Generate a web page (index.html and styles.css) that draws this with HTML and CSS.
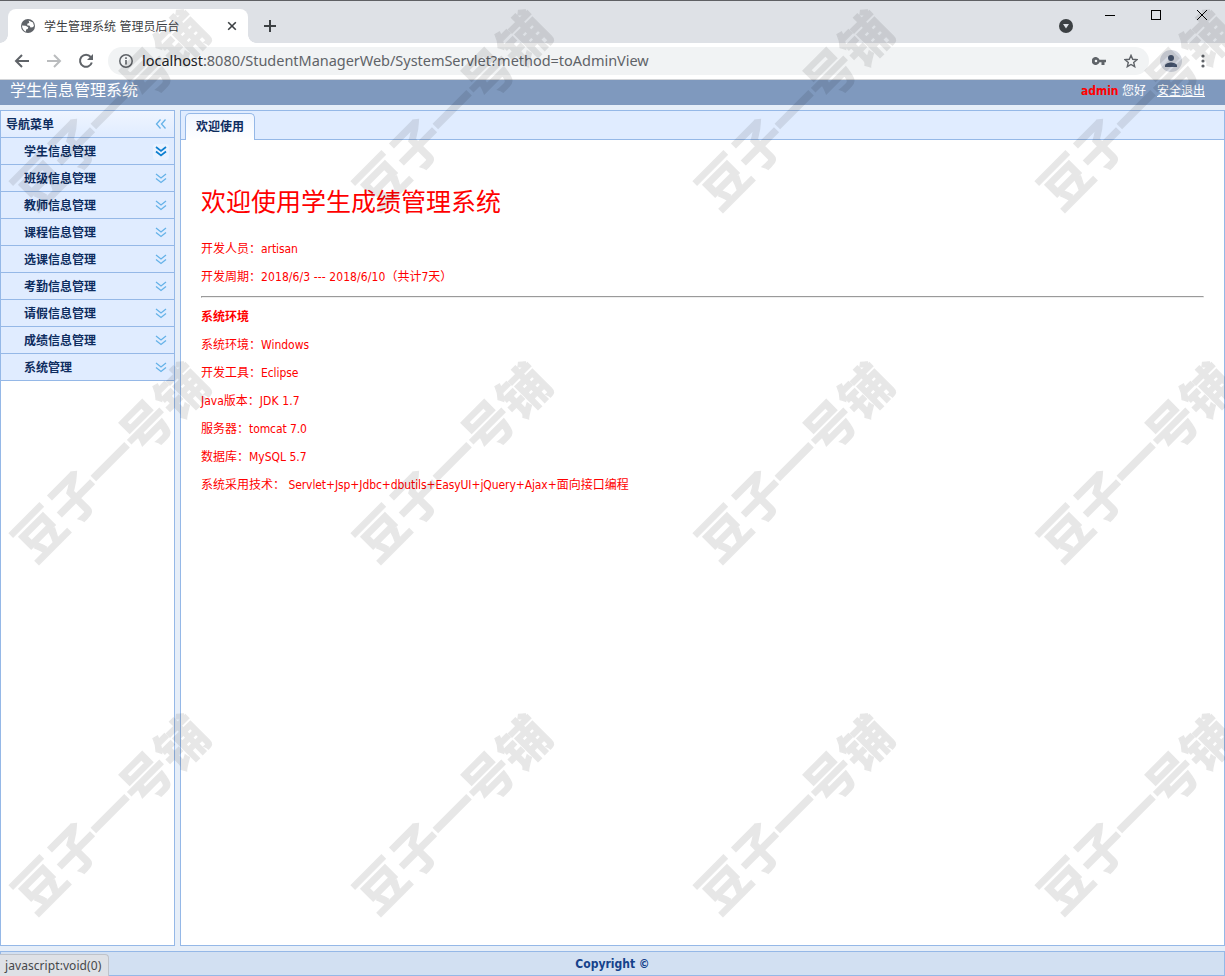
FILE: index.html
```html
<!DOCTYPE html>
<html lang="zh-CN">
<head>
    <meta charset="UTF-8">
    <title>学生管理系统 管理员后台</title>
    <link rel="stylesheet" href="styles.css">
</head>
<body>
    <!-- browser window -->
    <div class="tabstrip">
        <div class="browser-tab">
            <svg class="globe" width="16" height="16" viewBox="0 0 16 16">
                <circle cx="8" cy="8" r="7" fill="#5f6368"/>
                <path d="M8.6 2.5L13 4.4 14 8l-1.300 1.300-2.200.2-.8-1.700-2.600-.5.4-1.900 1.800-.5zM2 7.400l3.600.3 2.700 1.500-.6 1.900-1.600.4-.2 2.200C3.600 12.700 2 10.300 2 7.400z" fill="#fff"/>
            </svg>
            <span class="tab-title">学生管理系统 管理员后台</span>
            <svg class="tab-close" width="10" height="10" viewBox="0 0 10 10"><path d="M1.200 1.200l7.600 7.600M8.800 1.200L1.200 8.800" stroke="#3c4043" stroke-width="1.600"/></svg>
        </div>
        <svg class="new-tab" width="14" height="14" viewBox="0 0 14 14"><path d="M7 1v12M1 7h12" stroke="#3c4043" stroke-width="2"/></svg>
        <div class="window-buttons">
            <svg class="tab-search" width="14" height="14" viewBox="0 0 14 14"><circle cx="7" cy="7" r="7" fill="#3c4043"/><path d="M4 5h6L7 9.500z" fill="#dee1e6"/></svg>
            <svg width="10" height="10" viewBox="0 0 10 10"><path d="M0 5.500h10" stroke="#000"/></svg>
            <svg width="10" height="10" viewBox="0 0 10 10"><rect x=".5" y=".5" width="9" height="9" fill="none" stroke="#000"/></svg>
            <svg width="10" height="10" viewBox="0 0 10 10"><path d="M0 0l10 10M10 0L0 10" stroke="#000"/></svg>
        </div>
    </div>
    <div class="toolbar">
        <svg width="16" height="16" viewBox="0 0 16 16"><path d="M15 8H2.500M8 2L2 8l6 6" fill="none" stroke="#5f6368" stroke-width="2"/></svg>
        <svg width="16" height="16" viewBox="0 0 16 16"><path d="M1 8h12.500M8 2l6 6-6 6" fill="none" stroke="#babcbe" stroke-width="2"/></svg>
        <svg width="16" height="16" viewBox="0 0 16 16"><path d="M12.700 4A6 6 0 1 0 13.800 9.500" fill="none" stroke="#5f6368" stroke-width="2"/><path d="M15 1v6H9z" fill="#5f6368"/></svg>
        <div class="address">
            <svg width="14" height="14" viewBox="0 0 14 14"><circle cx="7" cy="7" r="6.200" fill="none" stroke="#5f6368" stroke-width="1.500"/><path d="M7 6v4.500M7 3.300v1.600" stroke="#5f6368" stroke-width="1.600"/></svg>
            <span class="url"><b>localhost</b>:8080/StudentManagerWeb/SystemServlet?method=toAdminView</span>
            <svg class="key" width="14" height="8" viewBox="0 0 14 8"><path d="M7.500 2.700A4 4 0 1 0 7.500 5.300H9.500V8h3V5.300H14V2.700zM4 5.300a1.300 1.300 0 1 1 0-2.600 1.300 1.300 0 0 1 0 2.600z" fill="#5f6368" fill-rule="evenodd"/></svg>
            <svg class="star" width="14" height="14" viewBox="0 0 14 14"><path d="M7 1.400l1.700 3.900 4.200.4-3.200 2.800 1 4.200L7 10.500l-3.700 2.200 1-4.200L1.100 5.700l4.200-.4z" fill="none" stroke="#5f6368" stroke-width="1.400"/></svg>
        </div>
        <svg class="avatar" width="22" height="22" viewBox="0 0 22 22"><circle cx="11" cy="11" r="11" fill="#d5d9e2"/><circle cx="11" cy="8" r="3" fill="#46546e"/><path d="M5 17v-1.500c0-2 4-3 6-3s6 1 6 3V17z" fill="#46546e"/></svg>
        <svg class="dots" width="4" height="14" viewBox="0 0 4 14"><g fill="#5f6368"><circle cx="2" cy="2" r="1.600"/><circle cx="2" cy="7" r="1.600"/><circle cx="2" cy="12" r="1.600"/></g></svg>
    </div>

    <!-- page -->
    <div class="north">
        <span class="logo">学生信息管理系统</span>
        <span class="head"><span class="user">admin</span>&nbsp;您好<a href="#" id="loginOut">安全退出</a></span>
    </div>
    <div class="layout">
        <div class="west">
            <div class="panel-header">导航菜单
                <svg class="collapse" width="12" height="12" viewBox="0 0 12 12"><path d="M5.500 .5L1.500 5l4 4.500M10.500 .5L6.500 5l4 4.500"/></svg>
            </div>
            <ul class="accordion">
                <li class="over">学生信息管理</li>
                <li>班级信息管理</li>
                <li>教师信息管理</li>
                <li>课程信息管理</li>
                <li>选课信息管理</li>
                <li>考勤信息管理</li>
                <li>请假信息管理</li>
                <li>成绩信息管理</li>
                <li>系统管理</li>
            </ul>
        </div>
        <div class="center">
            <div class="tabs-header"><div class="tab">欢迎使用</div></div>
            <div class="welcome">
                <h1>欢迎使用学生成绩管理系统</h1>
                <p>开发人员：<span class="tech">artisan</span></p>
                <p>开发周期：<span class="dates">2018/6/3 --- 2018/6/10</span>（共计7天）</p>
                <hr>
                <h2>系统环境</h2>
                <p>系统环境：Windows</p>
                <p>开发工具：<span class="tech">Eclipse</span></p>
                <p>Java版本：<span class="dates">JDK 1.7</span></p>
                <p>服务器：<span class="tech">tomcat 7.0</span></p>
                <p>数据库：MySQL 5.7</p>
                <p>系统采用技术： <span class="tech">Servlet+Jsp+Jdbc+dbutils+EasyUI+jQuery+Ajax+</span>面向接口编程</p>
            </div>
        </div>
    </div>
    <div class="south">Copyright &copy;</div>
    <div class="status">javascript:void(0)</div>

    <div class="watermark">
        <div class="marks">
            <span>豆子一号铺</span><span>豆子一号铺</span><span>豆子一号铺</span><span>豆子一号铺</span>
            <span>豆子一号铺</span><span>豆子一号铺</span><span>豆子一号铺</span><span>豆子一号铺</span>
            <span>豆子一号铺</span><span>豆子一号铺</span><span>豆子一号铺</span><span>豆子一号铺</span>
        </div>
    </div>

    <script>
        // every menu row gets the same expand arrow
        var rows = document.querySelectorAll(".accordion li");
        for (var i = 0; i < rows.length; i++) {
            rows[i].innerHTML += '<svg class="expand" width="16" height="16" viewBox="0 0 16 16"><path d="M3 3L8 7l5-4M3 7.500L8 11.500l5-4"/></svg>';
        }
    </script>
</body>
</html>
```
FILE: styles.css
```css
* {
    box-sizing: border-box;
}

html {
    overflow: hidden;
}

body {
    margin: 0;
    height: 976px;
    display: flex;
    flex-direction: column;
    position: relative;
    overflow: hidden;
    background: #e6eef8;
    font: 12px/16px "DejaVu Sans Condensed", "Noto Sans CJK SC", sans-serif;
}

svg {
    flex: none;
    display: block;
}

/* browser */
.tabstrip {
    height: 43px;
    flex: none;
    border-top: 1px solid #5f6064;
    background: #dee1e6;
    display: flex;
    padding: 8px 18px 0 8px;
}

.browser-tab {
    width: 240px;
    height: 34px;
    border-radius: 8px 8px 0 0;
    background: #fff;
    display: flex;
    align-items: center;
    padding: 0 11px 0 12px;
    position: relative;
}

.browser-tab:before,
.browser-tab:after {
    content: "";
    position: absolute;
    bottom: 0;
    width: 8px;
    height: 8px;
}

.browser-tab:before {
    left: -8px;
    background: radial-gradient(circle at 0 0, transparent 7.5px, #fff 8px);
}

.browser-tab:after {
    right: -8px;
    background: radial-gradient(circle at 100% 0, transparent 7.5px, #fff 8px);
}

.tab-title {
    color: #3c4043;
    margin-left: 8px;
    padding-top: 2px;
    flex: 1;
}

.new-tab {
    margin: 10px 0 0 15px;
}

.window-buttons {
    margin: 1px 0 0 auto;
    display: flex;
    gap: 36px;
}

.tab-search {
    margin: 9px -4px 0 0;
}

.toolbar {
    height: 37px;
    flex: none;
    background: #fff;
    border-bottom: 1px solid #d3d5d8;
    display: flex;
    align-items: center;
    gap: 16px;
    padding: 0 20px 0 14px;
}

.address {
    flex: 1;
    height: 28px;
    margin-left: -2px;
    border-radius: 14px;
    background: #f1f3f4;
    display: flex;
    align-items: center;
    padding: 0 11px;
}

.url {
    flex: 1;
    margin-left: 9px;
    padding-bottom: 2px;
    color: #5f6368;
    font: 14.5px "Noto Sans", sans-serif;
    letter-spacing: -.03px;
    white-space: nowrap;
}

.url b {
    color: #202124;
    font-weight: normal;
}

.key {
    margin-right: 18px;
}

.avatar {
    margin-left: -5px;
}

.dots {
    margin-left: 3px;
}

/* top bar */
.north {
    height: 25px;
    flex: none;
    background: #7f99be;
    color: #fff;
    display: flex;
    justify-content: space-between;
    line-height: 22px;
    padding: 0 20px 0 10px;
}

.logo {
    font-size: 16px;
}

.user {
    color: red;
    font-weight: bold;
}

.head a {
    color: #fff;
    margin-left: 11px;
}

.layout {
    height: 836px;
    margin-top: 5px;
    flex: none;
    display: flex;
    gap: 5px;
}

/* menu */
.west {
    width: 175px;
    background: #fff;
    border: 1px solid #95b8e7;
    color: #0e2d5f;
    font-weight: bold;
}

.panel-header {
    height: 27px;
    display: flex;
    justify-content: space-between;
    align-items: center;
    padding: 1px 7px 0 5px;
    border-bottom: 1px solid #95b8e7;
    background: linear-gradient(to bottom, #eff5ff 0, #e0ecff 100%);
}

.accordion {
    margin: 0;
    padding: 0;
    list-style: none;
}

.accordion li {
    height: 27px;
    display: flex;
    justify-content: space-between;
    align-items: center;
    padding: 2px 5px 0 23px;
    border-bottom: 1px solid #95b8e7;
    background: #e0ecff;
}

.collapse path,
.expand path {
    fill: none;
    stroke: #65b2e8;
    stroke-width: 1.3;
}

.over .expand {
    background: #eaf2ff;
    border-radius: 3px;
}

.over .expand path {
    stroke: #0d7fd0;
    stroke-width: 1.7;
}

/* content */
.center {
    flex: 1;
    background: #fff;
    border: 1px solid #95b8e7;
}

.tabs-header {
    height: 29px;
    padding: 2px 0 0 4px;
    background: #e0ecff;
    border-bottom: 1px solid #95b8e7;
}

.tab {
    width: 70px;
    height: 27px;
    border: 1px solid #95b8e7;
    border-bottom: 0;
    border-radius: 5px 5px 0 0;
    background: linear-gradient(to bottom, #eff5ff 0, #fff 100%);
    color: #0e2d5f;
    font-weight: bold;
    line-height: 26px;
    text-align: center;
}

.welcome {
    padding: 46px 20px 0;
    color: red;
}

.welcome h1 {
    margin: 0 0 21px;
    font-size: 25px;
    font-weight: normal;
    line-height: 34px;
}

.welcome h2 {
    margin: 0 0 12px;
    font-size: 12px;
}

.welcome p {
    margin: 0 0 12px;
    white-space: pre;
}

.dates {
    letter-spacing: .09px;
}

.tech {
    letter-spacing: -.09px;
}

.welcome hr {
    margin: -1px 0 11px;
}

/* footer */
.south {
    height: 25px;
    flex: none;
    margin-top: 5px;
    border: 1px solid #95b8e7;
    background: #d2e0f2;
    color: #15428b;
    font-weight: bold;
    line-height: 25px;
    text-align: center;
}

.status {
    position: absolute;
    left: 0;
    bottom: 0;
    width: 109px;
    height: 22px;
    padding-left: 5px;
    border: 1px solid #bfc3ca;
    border-width: 1px 1px 0 0;
    border-radius: 0 4px 0 0;
    background: #dee1e6;
    color: #46484b;
    font: 12px/22px "Noto Sans", sans-serif;
    letter-spacing: .07px;
}

/* diagonal watermark over the whole window */
.watermark {
    position: absolute;
    inset: 0;
    overflow: hidden;
    opacity: .09;
    pointer-events: none;
}

.marks {
    margin: -68px 0 0 -63px;
    display: grid;
    grid-template-columns: repeat(4, 342px);
    grid-auto-rows: 352px;
    place-items: center;
}

.marks span {
    font: bold 50.2px/60px "Noto Sans CJK SC", sans-serif;
    -webkit-text-stroke: 1.2px #000;
    white-space: nowrap;
    transform: rotate(-45deg);
}
```
